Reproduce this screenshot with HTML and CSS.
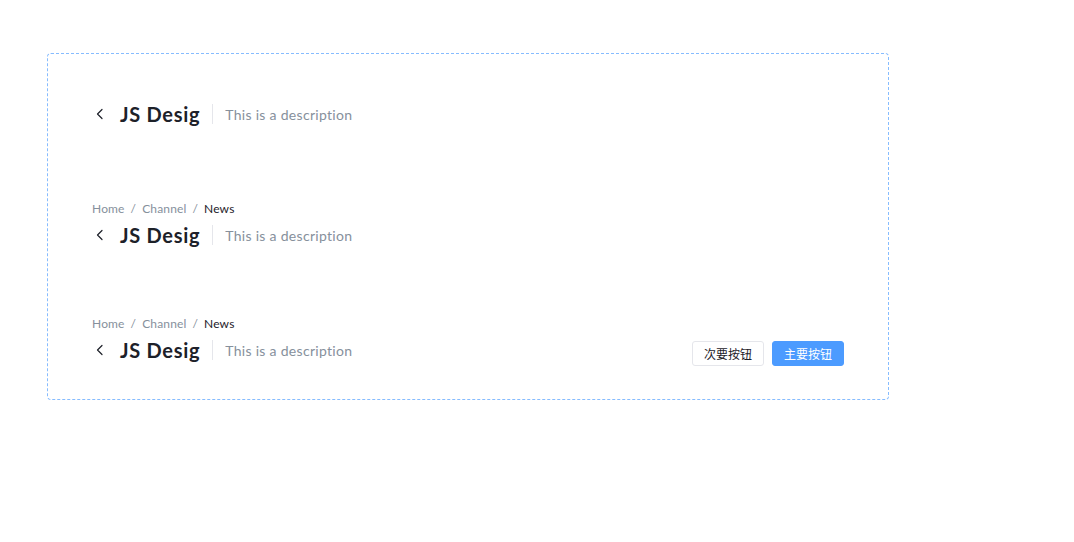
FILE: index.html
```html
<!DOCTYPE html>
<html lang="en">
<head>
    <meta charset="UTF-8">
    <title>Page header</title>
    <link rel="stylesheet" href="styles.css">
</head>
<body>
    <div class="demo">
        <!-- plain header -->
        <div class="page-header">
            <div class="ph-main">
                <span class="ph-back">
                    <svg width="14" height="14" viewBox="0 0 14 14"><path d="M9 2.5 L4.5 7 L9 11.5" fill="none" stroke="#1d2129" stroke-width="1.2" stroke-linecap="round" stroke-linejoin="round"/></svg>
                </span>
                <span class="ph-title">JS Desig</span>
                <span class="ph-divider"></span>
                <span class="ph-desc">This is a description</span>
            </div>
        </div>

        <!-- with breadcrumb -->
        <div class="page-header second">
            <div class="breadcrumb">
                <span>Home</span><span class="sep">/</span><span>Channel</span><span class="sep">/</span><span class="current">News</span>
            </div>
            <div class="ph-main">
                <span class="ph-back">
                    <svg width="14" height="14" viewBox="0 0 14 14"><path d="M9 2.5 L4.5 7 L9 11.5" fill="none" stroke="#1d2129" stroke-width="1.2" stroke-linecap="round" stroke-linejoin="round"/></svg>
                </span>
                <span class="ph-title">JS Desig</span>
                <span class="ph-divider"></span>
                <span class="ph-desc">This is a description</span>
            </div>
        </div>

        <!-- with breadcrumb and actions -->
        <div class="page-header third">
            <div class="breadcrumb">
                <span>Home</span><span class="sep">/</span><span>Channel</span><span class="sep">/</span><span class="current">News</span>
            </div>
            <div class="ph-main">
                <span class="ph-back">
                    <svg width="14" height="14" viewBox="0 0 14 14"><path d="M9 2.5 L4.5 7 L9 11.5" fill="none" stroke="#1d2129" stroke-width="1.2" stroke-linecap="round" stroke-linejoin="round"/></svg>
                </span>
                <span class="ph-title">JS Desig</span>
                <span class="ph-divider"></span>
                <span class="ph-desc">This is a description</span>
                <div class="ph-extra">
                    <button class="btn">次要按钮</button>
                    <button class="btn btn-primary">主要按钮</button>
                </div>
            </div>
        </div>
    </div>
</body>
</html>
```
FILE: styles.css
```css
body {
    margin: 0;
    padding: 53px 0 0 47px;
    font-family: Lato, "Noto Sans CJK SC", sans-serif;
    color: #1d2129;
}

.demo {
    width: 752px;
    border: 1px dashed #86bcff;
    border-radius: 4px;
    padding: 44px 44px 33px;
}

.page-header.second {
    margin-top: 68px;
}

.page-header.third {
    margin-top: 62px;
}

.breadcrumb {
    font-size: 12px;
    line-height: 22px;
    color: #86909c;
    letter-spacing: 0.15px;
}

.breadcrumb .sep {
    margin: 0 6px;
}

.breadcrumb .current {
    color: #1d2129;
}

.ph-main {
    display: flex;
    align-items: center;
    height: 32px;
}

.page-header.second .ph-main,
.page-header.third .ph-main {
    margin-top: -1px;
}

.ph-back {
    display: flex;
    width: 14px;
    margin-left: 1px;
    margin-right: 13px;
}

.ph-title {
    font-size: 20px;
    font-weight: 700;
    letter-spacing: 0.7px;
}

.ph-divider {
    width: 1px;
    height: 20px;
    background: #e5e6eb;
    margin: 0 12px;
}

.ph-desc {
    font-size: 14px;
    color: #86909c;
    letter-spacing: 0.3px;
}

.ph-extra {
    margin-left: auto;
    display: flex;
    gap: 8px;
    margin-top: 7px;
}

.btn {
    width: 72px;
    height: 25px;
    border: 1px solid #e5e6eb;
    border-radius: 3px;
    background: #fff;
    color: #1d2129;
    font-family: "Noto Sans CJK SC", sans-serif;
    font-size: 12px;
    padding: 0;
}

.btn-primary {
    background: #4c9bff;
    border-color: #4c9bff;
    color: #fff;
}
```
